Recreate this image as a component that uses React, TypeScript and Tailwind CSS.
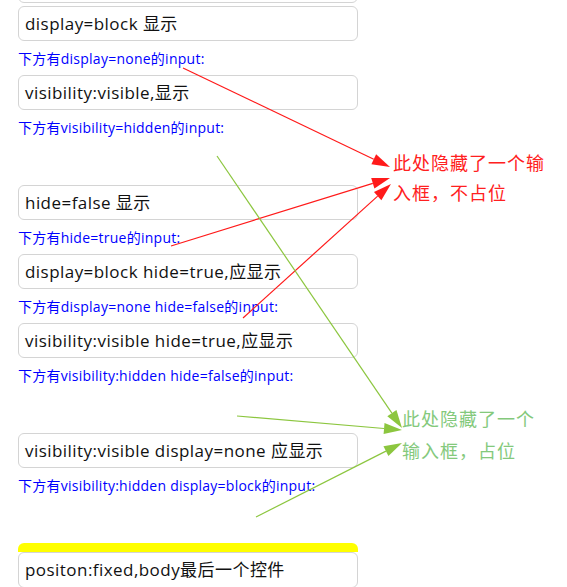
const rows: { kind: "box" | "label" | "gap"; text?: string }[] = [
  { kind: "box", text: "" },
  { kind: "box", text: "display=block 显示" },
  { kind: "label", text: "下方有display=none的input:" },
  { kind: "box", text: "visibility:visible,显示" },
  { kind: "label", text: "下方有visibility=hidden的input:" },
  { kind: "gap" },
  { kind: "box", text: "hide=false 显示" },
  { kind: "label", text: "下方有hide=true的input:" },
  { kind: "box", text: "display=block hide=true,应显示" },
  { kind: "label", text: "下方有display=none hide=false的input:" },
  { kind: "box", text: "visibility:visible hide=true,应显示" },
  { kind: "label", text: "下方有visibility:hidden hide=false的input:" },
  { kind: "gap" },
  { kind: "box", text: "visibility:visible display=none 应显示" },
  { kind: "label", text: "下方有visibility:hidden display=block的input:" },
];

function Box({ text }: { text: string }) {
  return (
    <div className="mt-[3px] flex h-[35px] items-center rounded-[6px] border border-[#d4d4d4] bg-white pl-[6px] text-[17px] tracking-[0.45px] text-[#111]">
      {text}
    </div>
  );
}

function Label({ text }: { text: string }) {
  return (
    <div className="h-[31px] pt-[8px] text-[14px] leading-[20px] tracking-[0.25px] text-[#0000ff]">
      {text}
    </div>
  );
}

// arrow lines drawn over the form
const arrows = [
  { x1: 183, y1: 68, x2: 390, y2: 167, color: "#ff1a1a" },
  { x1: 171, y1: 246, x2: 390, y2: 178, color: "#ff1a1a" },
  { x1: 243, y1: 318, x2: 391, y2: 184, color: "#ff1a1a" },
  { x1: 217, y1: 156, x2: 402, y2: 428, color: "#8cc63f" },
  { x1: 237, y1: 416, x2: 402, y2: 430, color: "#8cc63f" },
  { x1: 256, y1: 517, x2: 402, y2: 443, color: "#8cc63f" },
];

function Arrow({ x1, y1, x2, y2, color }: (typeof arrows)[number]) {
  const dx = x2 - x1;
  const dy = y2 - y1;
  const len = Math.hypot(dx, dy);
  const ux = dx / len;
  const uy = dy / len;
  const bx = x2 - ux * 18;
  const by = y2 - uy * 18;
  const px = -uy * 5.5;
  const py = ux * 5.5;
  return (
    <g>
      <line x1={x1} y1={y1} x2={bx} y2={by} stroke={color} strokeWidth={1.2} />
      <polygon
        points={`${x2},${y2} ${bx + px},${by + py} ${bx - px},${by - py}`}
        fill={color}
      />
    </g>
  );
}

export default function App() {
  return (
    <div
      className="relative h-[587px] w-[567px] overflow-hidden bg-white"
      style={{ fontFamily: "'Open Sans', 'Noto Sans CJK SC', sans-serif" }}
    >
      <div className="ml-[18px] mt-[-35px] w-[340px]">
        {rows.map((r, i) => {
          if (r.kind === "box") return <Box key={i} text={r.text ?? ""} />;
          if (r.kind === "label") return <Label key={i} text={r.text ?? ""} />;
          return <div key={i} className="h-[41px]" />;
        })}
        <div className="mt-[44px] h-[9px] rounded-t-[6px] bg-[#ffff00]" />
        <div className="flex h-[36px] items-center rounded-[6px] border border-[#d4d4d4] bg-white pl-[6px] text-[17px] tracking-[0.45px] text-[#111]">
          positon:fixed,body最后一个控件
        </div>
      </div>

      <svg
        className="pointer-events-none absolute left-0 top-0"
        width={567}
        height={587}
      >
        {arrows.map((a, i) => (
          <Arrow key={i} {...a} />
        ))}
      </svg>

      <div
        className="absolute left-[393px] top-[147px] text-[18px] leading-[30px] tracking-[1px] text-[#ff2020]"
        style={{ fontFamily: "'Noto Sans CJK SC', sans-serif" }}
      >
        <div>此处隐藏了一个输</div>
        <div>入框，不占位</div>
      </div>
      <div
        className="absolute left-[402px] top-[402px] text-[18px] leading-[32px] tracking-[1px] text-[#84c97c]"
        style={{ fontFamily: "'Noto Sans CJK SC', sans-serif" }}
      >
        <div>此处隐藏了一个</div>
        <div>输入框，占位</div>
      </div>
    </div>
  );
}
